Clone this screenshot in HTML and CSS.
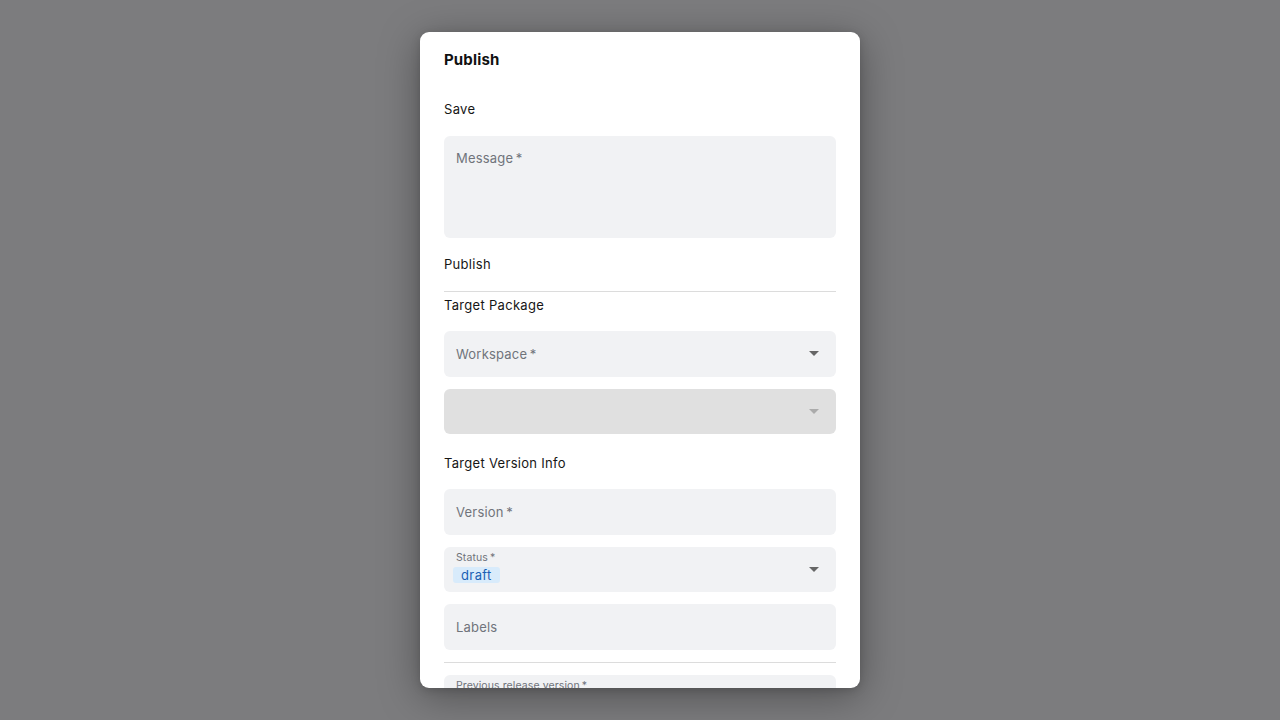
FILE: index.html
```html
<!DOCTYPE html>
<html>
<head>
<meta charset="utf-8">
<link rel="stylesheet" href="styles.css">
</head>
<body>
<div class="overlay">
  <div class="dialog">
    <div class="title">Publish</div>
    <div class="section save-head">Save</div>
    <div class="textarea"><span class="ph">Message&thinsp;*</span></div>
    <div class="section publish-head">Publish</div>
    <div class="divider"></div>
    <div class="section pkg-head">Target Package</div>
    <div class="fields">
      <div class="field select"><span class="ph">Workspace&thinsp;*</span><span class="arrow"></span></div>
      <div class="field select disabled"><span></span><span class="arrow"></span></div>
    </div>
    <div class="section ver-head">Target Version Info</div>
    <div class="fields">
      <div class="field"><span class="ph">Version&thinsp;*</span></div>
      <div class="field select status">
        <div class="stack">
          <span class="small">Status&thinsp;*</span>
          <span class="chip">draft</span>
        </div>
        <span class="arrow"></span>
      </div>
      <div class="field"><span class="ph">Labels</span></div>
      <div class="divider"></div>
      <div class="field prev"><span class="small">Previous release version&thinsp;*</span></div>
    </div>
  </div>
</div>
</body>
</html>
```

FILE: styles.css
```css
* { box-sizing: border-box; }
html, body { margin: 0; padding: 0; }
body {
  width: 1280px;
  height: 720px;
  background: #7c7c7e;
  font-family: Inter, "Noto Sans", sans-serif;
  color: #111;
  overflow: hidden;
}
.overlay {
  height: 720px;
  display: flex;
  justify-content: center;
  padding-top: 32px;
}
.dialog {
  width: 440px;
  height: 656px;
  background: #fff;
  border-radius: 9px;
  box-shadow: 0 8px 40px rgba(0,0,0,0.35), 0 2px 10px rgba(0,0,0,0.15);
  padding: 18px 24px 0;
  overflow: hidden;
  display: flex;
  flex-direction: column;
}
.title {
  font-size: 15px;
  line-height: 20px;
  font-weight: 700;
  letter-spacing: 0.15px;
  color: #111;
}
.section {
  font-size: 13px;
  line-height: 20px;
  letter-spacing: 0.3px;
  color: #161616;
}
.save-head { margin-top: 29px; }
.textarea {
  margin-top: 17px;
  height: 102px;
  background: #f1f2f4;
  border-radius: 6px;
  padding: 11px 12px;
  flex-shrink: 0;
}
.ph {
  font-size: 13px;
  line-height: 18px;
  letter-spacing: 0.2px;
  color: #70747b;
}
.publish-head { margin-top: 16px; }
.divider {
  height: 1px;
  background: #dcdcdc;
  flex-shrink: 0;
}
.publish-head + .divider { margin-top: 17px; }
.pkg-head { margin-top: 3px; }
.fields {
  display: flex;
  flex-direction: column;
  gap: 12px;
  margin-top: 16px;
}
.field {
  height: 45.5px;
  flex-shrink: 0;
  background: #f1f2f4;
  border-radius: 6px;
  padding: 0 17px 0 12px;
  display: flex;
  align-items: center;
  justify-content: space-between;
}
.field.disabled { background: #e0e0e0; }
.arrow {
  width: 0;
  height: 0;
  border-left: 5px solid transparent;
  border-right: 5px solid transparent;
  border-top: 5px solid #666;
}
.disabled .arrow { border-top-color: #ababab; }
.ver-head { margin-top: 19px; }
.status .stack {
  align-self: flex-start;
  padding-top: 5px;
  display: flex;
  flex-direction: column;
  align-items: flex-start;
}
.small {
  font-size: 10.5px;
  line-height: 12px;
  letter-spacing: 0.1px;
  color: #6f737a;
}
.chip {
  margin-left: -3px;
  margin-top: 3px;
  background: #d8ebfb;
  color: #1a5fb4;
  font-size: 13px;
  line-height: 16px;
  letter-spacing: 0.4px;
  padding: 0 8px;
  border-radius: 3px;
}
.prev {
  align-items: flex-start;
  padding-top: 5px;
}
```
